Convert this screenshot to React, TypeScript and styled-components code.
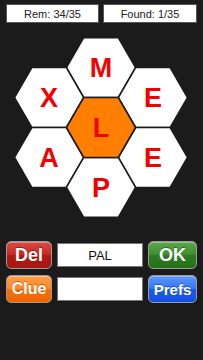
import React from 'react'
import styled, { createGlobalStyle } from 'styled-components'

const GlobalStyle = createGlobalStyle`
  html, body {
    margin: 0;
    padding: 0;
    background: #1b1b1b;
  }
  body {
    font-family: 'Liberation Sans', Arial, Helvetica, sans-serif;
  }
`

const Screen = styled.div`
  width: 203px;
  height: 360px;
  background: #1b1b1b;
  padding-top: 4px;
  box-sizing: border-box;
  overflow: hidden;
`

const StatsRow = styled.div`
  display: grid;
  grid-template-columns: 93px 94px;
  column-gap: 4px;
  padding: 0 6px;
`

const StatBox = styled.div`
  height: 19px;
  background: #fff;
  border: 1px solid #555;
  box-sizing: border-box;
  display: flex;
  align-items: center;
  justify-content: center;
  font-size: 11px;
  color: #222;
`

const Board = styled.svg`
  display: block;
  margin-top: 11px;
`

const Controls = styled.div`
  display: grid;
  grid-template-columns: 46px 86px 49px;
  grid-auto-rows: 28px;
  column-gap: 5px;
  row-gap: 6px;
  margin-top: 19px;
  padding-left: 6px;
`

const palette = {
  red: ['#dc4a44', '#c52a22', '#b11a12', '#a51810'],
  orange: ['#ffa04a', '#ff8624', '#f57008', '#ee6400'],
  green: ['#5aa84c', '#3e8e30', '#2c7c20', '#267018'],
  blue: ['#5c98ff', '#3476fa', '#1a5cf0', '#124ee0'],
}

type Tone = keyof typeof palette

const GlossButton = styled.div<{ $tone: Tone; $size: number }>`
  border-radius: 5px;
  border: 1px solid #9a9a9a;
  box-sizing: border-box;
  background: linear-gradient(
    ${x => palette[x.$tone][0]} 0%,
    ${x => palette[x.$tone][1]} 48%,
    ${x => palette[x.$tone][2]} 52%,
    ${x => palette[x.$tone][3]} 100%
  );
  color: #fff;
  font-weight: bold;
  font-size: ${x => x.$size}px;
  display: flex;
  align-items: center;
  justify-content: center;
  text-shadow: 0 -1px 0 rgba(0, 0, 0, 0.35);
  box-shadow: inset 0 1px 0 rgba(255, 255, 255, 0.35);
`

const Field = styled.div`
  margin: 2px 0;
  background: #fff;
  border: 1px solid #777;
  box-sizing: border-box;
  display: flex;
  align-items: center;
  justify-content: center;
  font-size: 13px;
  color: #111;
`

const R = 34.6
const H = Math.sqrt(3) * R

const hexPoints = (cx: number, cy: number) =>
  [
    [cx - R, cy],
    [cx - R / 2, cy - H / 2],
    [cx + R / 2, cy - H / 2],
    [cx + R, cy],
    [cx + R / 2, cy + H / 2],
    [cx - R / 2, cy + H / 2],
  ]
    .map(p => p.join(','))
    .join(' ')

const CX = 101
const CY = 127.5

const cells = [
  { letter: 'M', dx: 0, dy: -1 },
  { letter: 'X', dx: -1, dy: -0.5 },
  { letter: 'E', dx: 1, dy: -0.5 },
  { letter: 'A', dx: -1, dy: 0.5 },
  { letter: 'E', dx: 1, dy: 0.5 },
  { letter: 'P', dx: 0, dy: 1 },
  { letter: 'L', dx: 0, dy: 0, center: true },
]

const HexCell = ({ letter, cx, cy, center }: { letter: string; cx: number; cy: number; center?: boolean }) => (
  <g>
    <polygon
      points={hexPoints(cx, cy)}
      fill={center ? '#ff8000' : '#ffffff'}
      stroke="#1b1b1b"
      strokeWidth={1.6}
    />
    <text
      x={cx}
      y={cy + 9.8}
      textAnchor="middle"
      fontFamily="'Liberation Sans', Arial, sans-serif"
      fontWeight="bold"
      fontSize={27}
      fill="#f50000"
    >
      {letter}
    </text>
  </g>
)

export default function App() {
  return (
    <Screen>
      <GlobalStyle />
      <StatsRow>
        <StatBox>Rem: 34/35</StatBox>
        <StatBox>Found: 1/35</StatBox>
      </StatsRow>
      <Board width={203} height={188} viewBox="0 34 203 188">
        {cells.map((c, i) => (
          <HexCell
            key={i}
            letter={c.letter}
            cx={CX + c.dx * 1.5 * R}
            cy={CY + c.dy * H}
            center={c.center}
          />
        ))}
      </Board>
      <Controls>
        <GlossButton $tone="red" $size={18}>Del</GlossButton>
        <Field>PAL</Field>
        <GlossButton $tone="green" $size={18}>OK</GlossButton>
        <GlossButton $tone="orange" $size={16}>Clue</GlossButton>
        <Field />
        <GlossButton $tone="blue" $size={15}>Prefs</GlossButton>
      </Controls>
    </Screen>
  )
}
